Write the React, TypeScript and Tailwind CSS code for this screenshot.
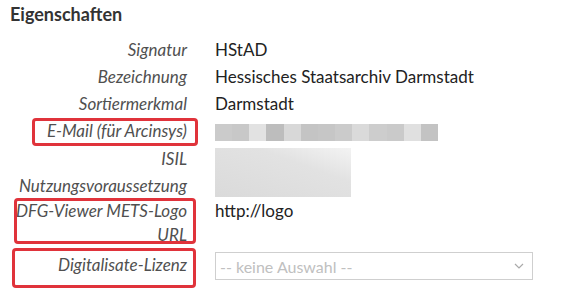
import React from "react";

const mosaic = [
  "#cbcbcb", "#c8c8c8", "#e2e2e2", "#bdbdbd", "#d8d8d8", "#c4c4c4", "#c6c6c6",
  "#cbcbcb", "#dadada", "#cdcdcd", "#cacaca", "#e0e0e0", "#c3c3c3",
];

function Row({ label, children, h }: { label: React.ReactNode; children?: React.ReactNode; h: string }) {
  return (
    <div className={`flex ${h}`}>
      <div className="w-[200px] shrink-0 pr-[13px] text-right italic text-[#505050] whitespace-nowrap">{label}</div>
      <div className="flex-1 pl-[15px] text-[#222] whitespace-nowrap">{children}</div>
    </div>
  );
}

export default function App() {
  return (
    <div
      className="relative w-[575px] h-[304px] bg-white overflow-hidden text-[17px] leading-[27px]"
      style={{ fontFamily: "Lato, 'Open Sans', sans-serif" }}
    >
      <div className="pl-[10px] pt-[2px] h-[36px] font-bold text-[18px] leading-[24px] text-[#333]">Eigenschaften</div>
      <Row label="Signatur" h="h-[27px]">HStAD</Row>
      <Row label="Bezeichnung" h="h-[27px]">Hessisches Staatsarchiv Darmstadt</Row>
      <Row label="Sortiermerkmal" h="h-[27px]">Darmstadt</Row>
      <Row label="E-Mail (für Arcinsys)" h="h-[28px]">
        <div className="flex mt-[7px] h-[17px] w-[223px]">
          {mosaic.map((c, i) => (
            <div key={i} className="flex-1 h-full" style={{ backgroundColor: c }} />
          ))}
        </div>
      </Row>
      <Row label="ISIL" h="h-[27px]">
        <div className="mt-[3px] h-[49px] w-[136px] bg-[linear-gradient(200deg,#f3f3f3_0%,#e2e2e2_35%,#dadada_100%)]" />
      </Row>
      <Row label="Nutzungsvoraussetzung" h="h-[27px]" />
      <Row
        label={
          <div className="leading-[24px]">
            DFG-Viewer METS-Logo
            <br />
            URL
          </div>
        }
        h="h-[52px]"
      >
        <div className="leading-[24px]">http://logo</div>
      </Row>
      <Row label="Digitalisate-Lizenz" h="h-[30px]">
        <div className="mt-[1px] flex h-[28px] w-[318px] items-center justify-between border border-[#cfcfcf] pl-[4px] pr-[8px] text-[#c0c0c0] text-[16px]">
          <span>-- keine Auswahl --</span>
          <svg width="10" height="6" viewBox="0 0 10 6" fill="none">
            <path d="M1 1l4 4 4-4" stroke="#aaa" strokeWidth="1.2" />
          </svg>
        </div>
      </Row>

      <div className="absolute left-[32px] top-[118px] w-[166px] h-[28px] rounded-[4px] border-[3px] border-[#e0333b]" />
      <div className="absolute left-[14px] top-[198px] w-[182px] h-[46px] rounded-[4px] border-[3px] border-[#e0333b]" />
      <div className="absolute left-[12px] top-[248px] w-[184px] h-[40px] rounded-[4px] border-[3px] border-[#e0333b]" />
    </div>
  );
}
